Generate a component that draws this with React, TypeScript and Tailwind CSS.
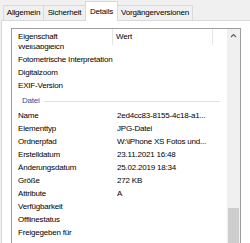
import React from 'react';

const rowsBefore = ['Weißabgleich', 'Fotometrische Interpretation', 'Digitalzoom', 'EXIF-Version'];

const rowsAfter: [string, string][] = [
  ['Name', '2ed4cc83-8155-4c18-a1...'],
  ['Elementtyp', 'JPG-Datei'],
  ['Ordnerpfad', 'W:\\iPhone XS Fotos und...'],
  ['Erstelldatum', '23.11.2021 16:48'],
  ['Änderungsdatum', '25.02.2019 18:34'],
  ['Größe', '272 KB'],
  ['Attribute', 'A'],
  ['Verfügbarkeit', ''],
  ['Offlinestatus', ''],
  ['Freigegeben für', ''],
];

const Row = ({ label, value }: { label: string; value?: string }) => (
  <div className="flex h-[13px] items-center whitespace-nowrap">
    <div className="w-[105px] shrink-0 pl-[6px]">{label}</div>
    <div>{value}</div>
  </div>
);

const tabs = ['Allgemein', 'Sicherheit', 'Details', 'Vorgängerversionen'];
const tabWidths = ['w-[41px]', 'w-[41px]', 'w-[33px]', 'w-[75px]'];

export default function App() {
  return (
    <div
      className="flex h-[243px] w-[250px] flex-col overflow-hidden bg-[#f0f0f0] text-[8px] tracking-[-0.2px] text-black"
      style={{ fontFamily: '"Liberation Sans", Arial, sans-serif' }}
    >
      {/* tab strip */}
      <div className="flex h-[20px] shrink-0 items-end pl-[3px]">
        {tabs.map((t, i) =>
          t === 'Details' ? (
            <div
              key={t}
              className={`relative z-10 -mb-px flex h-[20px] ${tabWidths[i]} items-start justify-center border-x border-t border-[#d9d9d9] bg-white pt-[4px]`}
            >
              {t}
            </div>
          ) : (
            <div
              key={t}
              className={`flex h-[15px] ${tabWidths[i]} items-center justify-center border-t border-[#d9d9d9] bg-[#f0f0f0] ${i === 0 ? 'border-x' : ''} ${i === 3 ? 'border-r' : ''}`}
            >
              {t}
            </div>
          )
        )}
      </div>

      {/* panel */}
      <div className="ml-[1px] flex-1 border-l border-t border-[#d9d9d9] bg-white pl-[9px] pt-[7px]">
        <div className="flex h-[240px] w-[230px] border border-[#9d9d9d] bg-white">
          <div className="flex min-w-0 flex-1 flex-col">
            {/* header */}
            <div className="relative z-10 flex h-[16px] shrink-0 items-center bg-white">
              <div className="flex h-full w-[101px] items-center border-r border-[#e5e5e5] pl-[6px]">Eigenschaft</div>
              <div className="flex h-full w-[100px] items-center border-r border-[#e5e5e5] pl-[3px]">Wert</div>
            </div>
            {/* list */}
            <div className="flex-1 overflow-hidden">
              <div className="-mt-[5px]">
                {rowsBefore.map((r) => (
                  <Row key={r} label={r} />
                ))}
                <div className="flex h-[17px] items-center pl-[10px] pt-[1px]">
                  <span className="text-[#2a52a8]">Datei</span>
                  <div className="ml-[4px] mr-[7px] h-px flex-1 bg-[#e2e2e2]" />
                </div>
                {rowsAfter.map(([l, v]) => (
                  <Row key={l} label={l} value={v} />
                ))}
              </div>
            </div>
          </div>
          {/* scrollbar */}
          <div className="flex w-[13px] shrink-0 flex-col bg-[#f0f0f0]">
            <div className="flex h-[13px] items-center justify-center">
              <svg width="7" height="5" viewBox="0 0 7 5">
                <polyline points="1,4 3.5,1.5 6,4" fill="none" stroke="#606060" strokeWidth="1.2" />
              </svg>
            </div>
            <div className="h-[171px]" />
            <div className="mx-[1px] h-[60px] bg-[#cdcdcd]" />
          </div>
        </div>
      </div>
    </div>
  );
}
